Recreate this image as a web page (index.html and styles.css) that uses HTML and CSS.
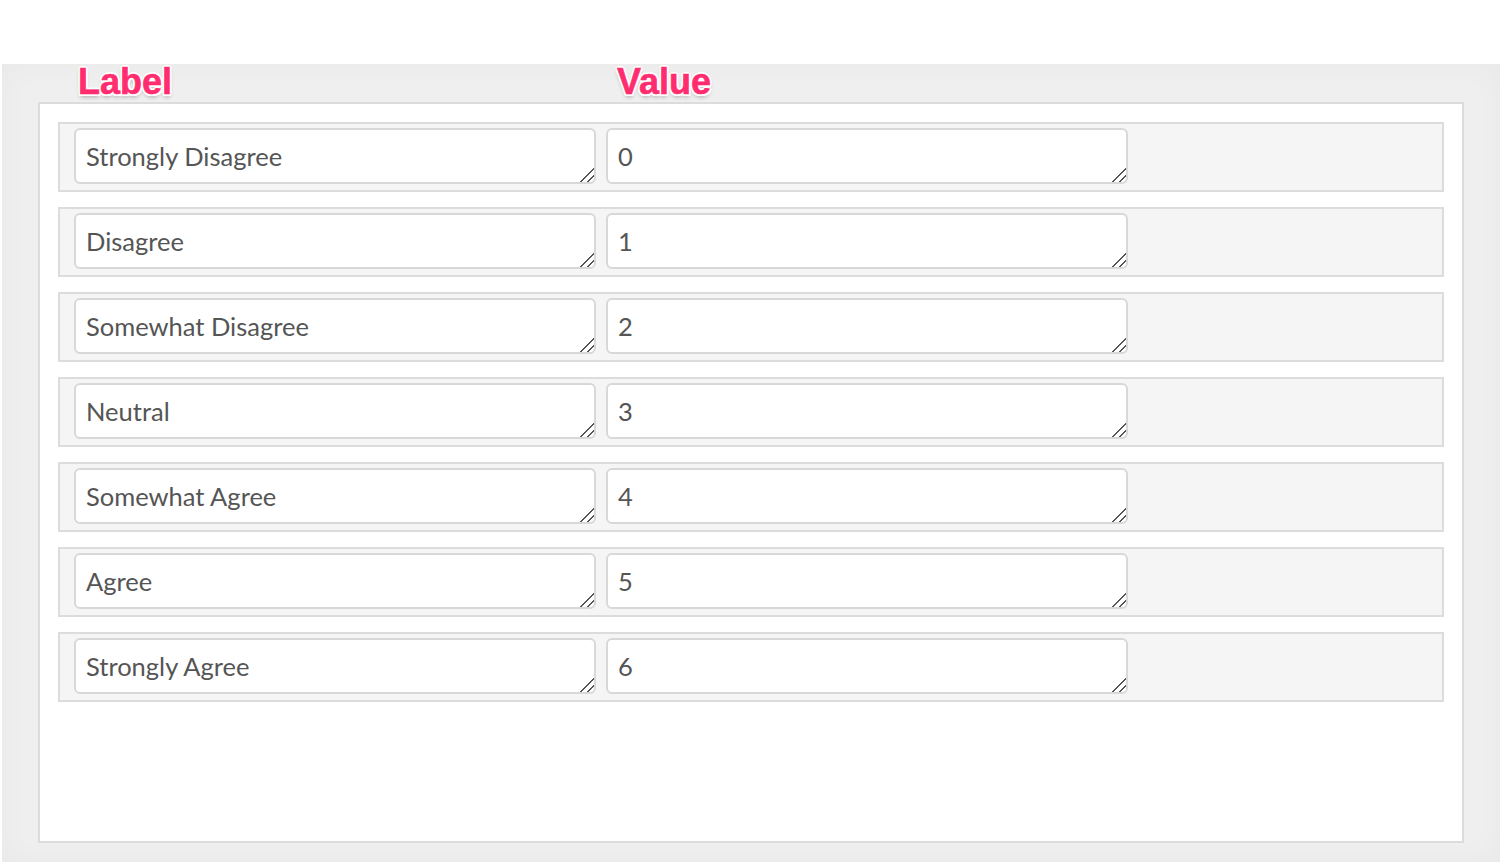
FILE: index.html
```html
<!DOCTYPE html>
<html>
<head>
	<meta charset="utf-8">
	<title>Scale options</title>
	<link rel="stylesheet" href="styles.css">
</head>
<body>
	<div class="editor">
		<div class="heads">
			<span class="head head-label">Label</span>
			<span class="head head-value">Value</span>
		</div>
		<div class="panel">
			<div class="row">
				<textarea class="field">Strongly Disagree</textarea>
				<textarea class="field">0</textarea>
			</div>
			<div class="row">
				<textarea class="field">Disagree</textarea>
				<textarea class="field">1</textarea>
			</div>
			<div class="row">
				<textarea class="field">Somewhat Disagree</textarea>
				<textarea class="field">2</textarea>
			</div>
			<div class="row">
				<textarea class="field">Neutral</textarea>
				<textarea class="field">3</textarea>
			</div>
			<div class="row">
				<textarea class="field">Somewhat Agree</textarea>
				<textarea class="field">4</textarea>
			</div>
			<div class="row">
				<textarea class="field">Agree</textarea>
				<textarea class="field">5</textarea>
			</div>
			<div class="row">
				<textarea class="field">Strongly Agree</textarea>
				<textarea class="field">6</textarea>
			</div>
		</div>
	</div>
</body>
</html>
```

FILE: styles.css
```css
* {
  box-sizing: border-box;
}

html, body {
	margin: 0;
	height: 100%;
	background: #fff;
	overflow: hidden;
}

.editor {
	margin: 64px 0 0 2px;
	width: 1498px;
	height: 798px;
	padding: 0 36px;
	background: #efefef;
	box-shadow: 0 0 30px rgba(0,0,0,0.03) inset;
}

.heads {
	height: 38px;
	display: flex;
	align-items: flex-end;
	padding-bottom: 2px;
}

.head {
	font-family: "Liberation Sans", Arial, sans-serif;
	font-weight: 700;
	font-size: 36px;
	line-height: 1;
	color: #ff2d6f;
	-webkit-text-stroke: 0.6px #ff2d6f;
	text-shadow: 2px 0 0 #fff, -2px 0 0 #fff, 0 2px 0 #fff, 0 -2px 0 #fff,
		1.5px 1.5px 0 #fff, -1.5px 1.5px 0 #fff, 1.5px -1.5px 0 #fff, -1.5px -1.5px 0 #fff,
		0 3px 4px rgba(0,0,0,0.3);
}

.head-label {
	margin-left: 40px;
}

.head-value {
	margin-left: 445px;
}

.panel {
	height: 741px;
	background: #fff;
	border: 2px solid #dcdcdc;
	padding: 18px 18px 0 18px;
}

.row {
	display: flex;
	gap: 10px;
	height: 70px;
	margin-bottom: 15px;
	padding: 4px 14px;
	background: #f5f5f5;
	border: 2px solid #dcdcdc;
}

.field {
	width: 522px;
	height: 56px;
	margin: 0;
	padding: 11px 10px 0 10px;
	border: 2px solid #d8d8d8;
	border-radius: 6px;
	background: #fff;
	font-family: Lato, "Open Sans", sans-serif;
	font-size: 25.5px;
	line-height: 1.2;
	color: #555;
	outline: none;
	overflow: hidden;
}

.field::-webkit-scrollbar {
	width: 16px;
	height: 16px;
	background: transparent;
}

.field::-webkit-resizer {
	background:
		linear-gradient(135deg, transparent 0 52%, #555 52% 58%, transparent 58%),
		linear-gradient(135deg, transparent 0 76%, #555 76% 82%, transparent 82%);
}
```
